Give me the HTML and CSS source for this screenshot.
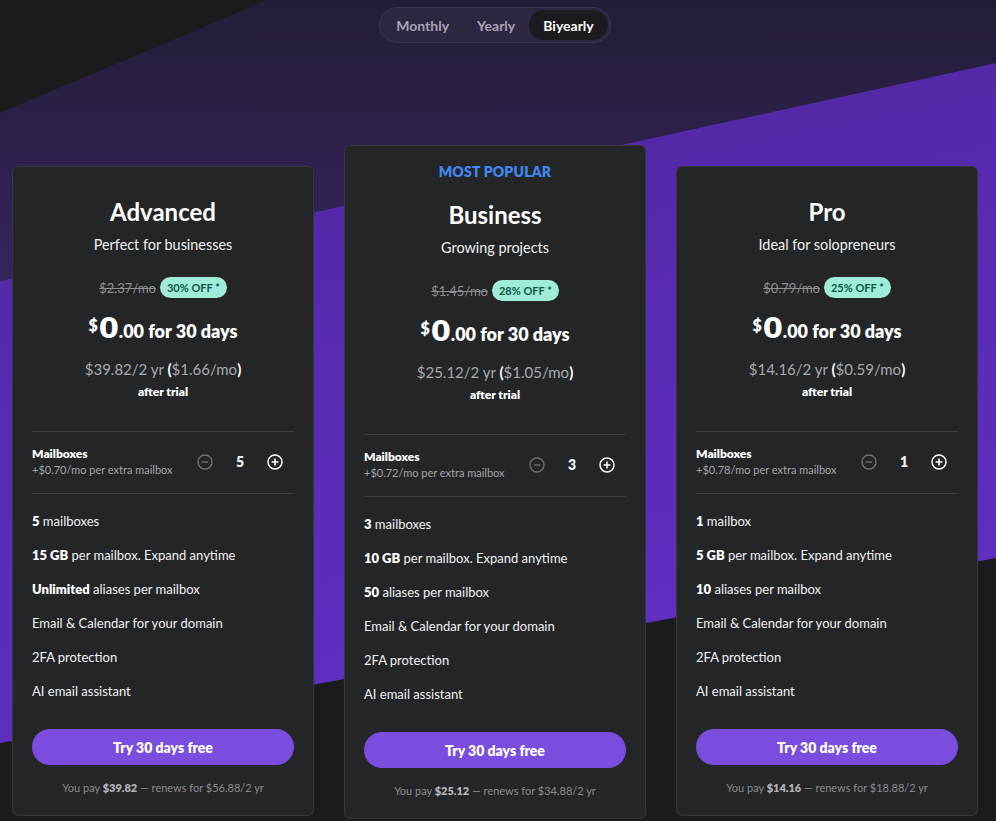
FILE: index.html
```html
<!DOCTYPE html>
<html lang="en">
<head>
<meta charset="utf-8">
<title>Pricing</title>
<link rel="stylesheet" href="styles.css">
</head>
<body>
<div class="backdrop" aria-hidden="true">
  <svg viewBox="0 0 996 821" preserveAspectRatio="none" width="100%" height="100%">
    <defs>
      <linearGradient id="gDark" x1="0" y1="0" x2="0" y2="1">
        <stop offset="0" stop-color="#241c36"/>
        <stop offset="1" stop-color="#35245f"/>
      </linearGradient>
      <linearGradient id="gBright" x1="0" y1="0" x2="0.3" y2="1">
        <stop offset="0" stop-color="#46288c"/>
        <stop offset="0.35" stop-color="#5529ad"/>
        <stop offset="1" stop-color="#5f2fc2"/>
      </linearGradient>
    </defs>
    <rect width="996" height="821" fill="#1b1b1e"/>
    <polygon points="267,0 996,0 996,63 0,281 0,113" fill="url(#gDark)"/>
    <polygon points="0,281 996,63 996,558 0,743" fill="url(#gBright)"/>
  </svg>
</div>

<main class="page">
  <nav class="toggle">
    <button class="tab">Monthly</button>
    <button class="tab">Yearly</button>
    <button class="tab active">Biyearly</button>
  </nav>

  <div class="plans">
    <section class="card side">
      <h2 class="name">Advanced</h2>
      <p class="tagline">Perfect for businesses</p>
      <div class="was-row"><s class="was">$2.37/mo</s><span class="badge">30% OFF *</span></div>
      <div class="price"><span class="cur">$</span><span class="big">0</span><span class="rest">.00 for 30 days</span></div>
      <p class="after-price">$39.82/2 yr <span class="par">(</span>$1.66/mo<span class="par">)</span></p>
      <p class="after-trial">after trial</p>
      <div class="stepper">
        <div class="st-text">
          <div class="st-title">Mailboxes</div>
          <div class="st-sub">+$0.70/mo per extra mailbox</div>
        </div>
        <div class="st-ctrl">
          <svg class="ic minus" viewBox="0 0 16 16"><circle cx="8" cy="8" r="7" fill="none" stroke="currentColor" stroke-width="1.4"/><path d="M4.8 8h6.4" stroke="currentColor" stroke-width="1.4"/></svg>
          <span class="count">5</span>
          <svg class="ic plus" viewBox="0 0 16 16"><circle cx="8" cy="8" r="7" fill="none" stroke="currentColor" stroke-width="1.5"/><path d="M4.6 8h6.8M8 4.6v6.8" stroke="currentColor" stroke-width="1.6"/></svg>
        </div>
      </div>
      <ul class="features">
        <li><b>5</b> mailboxes</li>
        <li><b>15 GB</b> per mailbox. Expand anytime</li>
        <li><b>Unlimited</b> aliases per mailbox</li>
        <li>Email &amp; Calendar for your domain</li>
        <li>2FA protection</li>
        <li>AI email assistant</li>
      </ul>
      <button class="cta">Try 30 days free</button>
      <p class="foot">You pay <b>$39.82</b> — renews for $56.88/2 yr</p>
    </section>

    <section class="card featured">
      <div class="popular">MOST POPULAR</div>
      <h2 class="name">Business</h2>
      <p class="tagline">Growing projects</p>
      <div class="was-row"><s class="was">$1.45/mo</s><span class="badge">28% OFF *</span></div>
      <div class="price"><span class="cur">$</span><span class="big">0</span><span class="rest">.00 for 30 days</span></div>
      <p class="after-price">$25.12/2 yr <span class="par">(</span>$1.05/mo<span class="par">)</span></p>
      <p class="after-trial">after trial</p>
      <div class="stepper">
        <div class="st-text">
          <div class="st-title">Mailboxes</div>
          <div class="st-sub">+$0.72/mo per extra mailbox</div>
        </div>
        <div class="st-ctrl">
          <svg class="ic minus" viewBox="0 0 16 16"><circle cx="8" cy="8" r="7" fill="none" stroke="currentColor" stroke-width="1.4"/><path d="M4.8 8h6.4" stroke="currentColor" stroke-width="1.4"/></svg>
          <span class="count">3</span>
          <svg class="ic plus" viewBox="0 0 16 16"><circle cx="8" cy="8" r="7" fill="none" stroke="currentColor" stroke-width="1.5"/><path d="M4.6 8h6.8M8 4.6v6.8" stroke="currentColor" stroke-width="1.6"/></svg>
        </div>
      </div>
      <ul class="features">
        <li><b>3</b> mailboxes</li>
        <li><b>10 GB</b> per mailbox. Expand anytime</li>
        <li><b>50</b> aliases per mailbox</li>
        <li>Email &amp; Calendar for your domain</li>
        <li>2FA protection</li>
        <li>AI email assistant</li>
      </ul>
      <button class="cta">Try 30 days free</button>
      <p class="foot">You pay <b>$25.12</b> — renews for $34.88/2 yr</p>
    </section>

    <section class="card side">
      <h2 class="name">Pro</h2>
      <p class="tagline">Ideal for solopreneurs</p>
      <div class="was-row"><s class="was">$0.79/mo</s><span class="badge">25% OFF *</span></div>
      <div class="price"><span class="cur">$</span><span class="big">0</span><span class="rest">.00 for 30 days</span></div>
      <p class="after-price">$14.16/2 yr <span class="par">(</span>$0.59/mo<span class="par">)</span></p>
      <p class="after-trial">after trial</p>
      <div class="stepper">
        <div class="st-text">
          <div class="st-title">Mailboxes</div>
          <div class="st-sub">+$0.78/mo per extra mailbox</div>
        </div>
        <div class="st-ctrl">
          <svg class="ic minus" viewBox="0 0 16 16"><circle cx="8" cy="8" r="7" fill="none" stroke="currentColor" stroke-width="1.4"/><path d="M4.8 8h6.4" stroke="currentColor" stroke-width="1.4"/></svg>
          <span class="count">1</span>
          <svg class="ic plus" viewBox="0 0 16 16"><circle cx="8" cy="8" r="7" fill="none" stroke="currentColor" stroke-width="1.5"/><path d="M4.6 8h6.8M8 4.6v6.8" stroke="currentColor" stroke-width="1.6"/></svg>
        </div>
      </div>
      <ul class="features">
        <li><b>1</b> mailbox</li>
        <li><b>5 GB</b> per mailbox. Expand anytime</li>
        <li><b>10</b> aliases per mailbox</li>
        <li>Email &amp; Calendar for your domain</li>
        <li>2FA protection</li>
        <li>AI email assistant</li>
      </ul>
      <button class="cta">Try 30 days free</button>
      <p class="foot">You pay <b>$14.16</b> — renews for $18.88/2 yr</p>
    </section>
  </div>
</main>
</body>
</html>
```

FILE: styles.css
```css
* { box-sizing: border-box; }

html, body {
  margin: 0;
  padding: 0;
  height: 821px;
  overflow: hidden;
  background: #1b1b1e;
}

body {
  position: relative;
  font-family: "Lato", "Noto Sans", sans-serif;
  color: #f2f2f2;
}

.backdrop {
  position: absolute;
  inset: 0;
  z-index: 0;
}
.backdrop svg { display: block; }

.page {
  position: relative;
  z-index: 1;
  width: 966px;
  margin-left: 12px;
  padding-top: 7px;
  display: flex;
  flex-direction: column;
  align-items: center;
}

/* toggle */
.toggle {
  display: flex;
  padding: 2px;
  border: 1px solid #3a3250;
  background: #2d2640;
  border-radius: 18px;
  height: 36px;
}
.tab {
  border: 0;
  background: transparent;
  font-family: inherit;
  font-weight: 700;
  font-size: 14px;
  color: #a9a4b6;
  padding: 0 14px;
  height: 30px;
  border-radius: 15px;
}
.tab.active {
  background: #1b1a1e;
  color: #ffffff;
}

/* plans */
.plans {
  display: grid;
  grid-template-columns: repeat(3, 302px);
  column-gap: 30px;
  align-items: start;
  margin-top: 102px;
  width: 100%;
}

.card {
  background: #242527;
  border: 1px solid #36373a;
  border-radius: 6px;
  padding: 31px 19px 20px;
  display: flex;
  flex-direction: column;
  align-items: center;
  text-align: center;
}
.card.side { margin-top: 21px; }
.card.featured { padding-top: 18px; }

.popular {
  color: #3d88f2;
  font-weight: 800;
  font-size: 14px;
  line-height: 16px;
  letter-spacing: 0.2px;
  margin-bottom: 21px;
}

.name {
  margin: 0;
  font-size: 24px;
  line-height: 28px;
  font-weight: 700;
  color: #ffffff;
}
.tagline {
  margin: 10px 0 0;
  font-size: 14.4px;
  line-height: 18px;
  color: #f0f0f0;
}

.was-row {
  margin-top: 23px;
  display: flex;
  align-items: center;
  gap: 4px;
  height: 21px;
}
.was {
  color: #8e8e90;
  font-size: 13px;
}
.badge {
  background: #a0ecd8;
  color: #0d5a47;
  font-weight: 700;
  font-size: 11px;
  line-height: 21px;
  height: 21px;
  padding: 0 7px;
  border-radius: 11px;
}

.price {
  margin-top: 14px;
  height: 32px;
  display: flex;
  align-items: baseline;
  font-weight: 800;
  color: #ffffff;
}
.price .cur {
  font-size: 16px;
  align-self: flex-start;
  margin-top: 3px;
  margin-right: 1px;
}
.price .big {
  font-family: "DejaVu Sans", "Lato", sans-serif;
  font-weight: 700;
  font-size: 29px;
  line-height: 32px;
}
.price .rest {
  font-size: 18px;
}

.after-price {
  margin: 15px 0 0;
  font-size: 15px;
  line-height: 20px;
  color: #a9a9ab;
}
.after-price .par { color: #ffffff; font-weight: 700; }

.after-trial {
  margin: 5px 0 0;
  font-size: 12px;
  line-height: 16px;
  font-weight: 800;
  color: #ffffff;
}

.stepper {
  margin-top: 31px;
  width: 100%;
  border-top: 1px solid #3b3c3f;
  border-bottom: 1px solid #3b3c3f;
  padding: 14px 0 16px;
  display: flex;
  align-items: center;
  justify-content: space-between;
  text-align: left;
}
.st-title {
  font-size: 12px;
  line-height: 16px;
  font-weight: 800;
  color: #ffffff;
}
.st-sub {
  font-size: 11px;
  line-height: 15px;
  color: #a3a3a5;
}
.st-ctrl {
  display: flex;
  align-items: center;
  gap: 21px;
  margin-right: 11px;
}
.ic { width: 16px; height: 16px; display: block; }
.ic.minus { color: #6f6f72; }
.ic.plus { color: #ffffff; }
.count {
  font-weight: 800;
  font-size: 14px;
  width: 12px;
  text-align: center;
}

.features {
  list-style: none;
  margin: 18px 0 0;
  padding: 0;
  width: 100%;
  text-align: left;
  display: flex;
  flex-direction: column;
  gap: 16px;
}
.features li {
  font-size: 13px;
  line-height: 18px;
  color: #f0f0f0;
}
.features b { font-weight: 800; color: #ffffff; }

.cta {
  margin-top: 29px;
  width: 100%;
  height: 36px;
  border: 0;
  border-radius: 18px;
  background: #7a4ddf;
  color: #ffffff;
  font-family: inherit;
  font-weight: 800;
  font-size: 14px;
}

.foot {
  margin: 16px 0 0;
  font-size: 11px;
  line-height: 14px;
  color: #8b8b8e;
}
.foot b { color: #b4b4b6; font-weight: 800; }
```
